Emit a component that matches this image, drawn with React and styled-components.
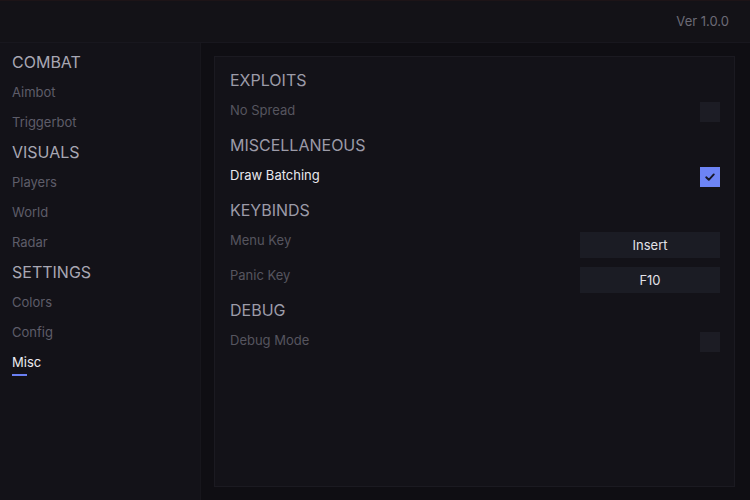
import React from "react";
import styled, { createGlobalStyle } from "styled-components";

const Global = createGlobalStyle`
  html, body { margin: 0; padding: 0; background: #121117; }
  body { font-family: Inter, "Noto Sans", sans-serif; -webkit-font-smoothing: antialiased; }
  * { box-sizing: border-box; }
`;

const Window = styled.div`
  width: 750px;
  height: 500px;
  display: grid;
  grid-template-rows: 43px 1fr;
  grid-template-columns: 200px 1fr;
  background: #131218;
  overflow: hidden;
`;

const Header = styled.header`
  grid-column: 1 / 3;
  display: flex;
  align-items: center;
  justify-content: flex-end;
  padding: 0 21px 2px 0;
  background: #131217;
  border-bottom: 1px solid #18171e;
  border-top: 1px solid #1d1417;
`;

const Version = styled.span`
  font-size: 13px;
  color: #6c6b76;
`;

const Sidebar = styled.nav`
  display: flex;
  flex-direction: column;
  padding: 4px 0 0 12px;
  background: #131218;
`;

const NavHeading = styled.div`
  height: 30px;
  display: flex;
  align-items: center;
  font-size: 16px;
  color: #a8a7b3;
`;

const NavItem = styled.div`
  position: relative;
  height: 30px;
  display: flex;
  align-items: center;
  font-size: 13px;
  color: ${(p) => (p.$active ? "#ececf2" : "#5e5d69")};
  &::after {
    content: "";
    display: ${(p) => (p.$active ? "block" : "none")};
    position: absolute;
    left: 0;
    bottom: 1px;
    width: 15px;
    height: 2px;
    background: #6a7ff2;
  }
`;

const Content = styled.main`
  display: flex;
  padding: 13px 15px 13px 13px;
  background: #0f0e13;
  border-left: 1px solid #17161c;
`;

const Panel = styled.section`
  flex: 1;
  display: flex;
  flex-direction: column;
  padding: 10px 14px 10px 15px;
  background: #131218;
  border: 1px solid #1b1a21;
`;

const Section = styled.div`
  display: flex;
  flex-direction: column;
  & + & { margin-top: 5px; }
`;

const SectionTitle = styled.div`
  height: 25px;
  display: flex;
  align-items: center;
  font-size: 16px;
  color: #9c9ba8;
`;

const Row = styled.div`
  height: 35px;
  display: flex;
  align-items: center;
  justify-content: space-between;
`;

const Label = styled.span`
  font-size: 13px;
  color: ${(p) => (p.$bright ? "#e8e8ee" : "#56555f")};
`;

const Box = styled.div`
  width: 20px;
  height: 20px;
  margin-top: 5px;
  display: flex;
  align-items: center;
  justify-content: center;
  background: ${(p) => (p.$checked ? "#6d84f5" : "#1c1c24")};
`;

const KeyButton = styled.div`
  width: 140px;
  height: 26px;
  margin-top: 10px;
  display: flex;
  align-items: center;
  justify-content: center;
  font-size: 13px;
  color: #e2e2e8;
  background: #1b1c24;
`;

const Check = ({ checked }) => (
  <Box $checked={checked}>
    {checked && (
      <svg width="12" height="12" viewBox="0 0 12 12">
        <path d="M2.2 6.3 L4.8 8.8 L9.8 3.4" fill="none" stroke="#171827" strokeWidth="1.9" strokeLinecap="round" strokeLinejoin="round" />
      </svg>
    )}
  </Box>
);

const nav = [
  { title: "COMBAT", items: ["Aimbot", "Triggerbot"] },
  { title: "VISUALS", items: ["Players", "World", "Radar"] },
  { title: "SETTINGS", items: ["Colors", "Config", "Misc"] },
];

export default function App() {
  return (
    <>
      <Global />
      <Window>
        <Header>
          <Version>Ver 1.0.0</Version>
        </Header>
        <Sidebar>
          {nav.map((g) => (
            <React.Fragment key={g.title}>
              <NavHeading>{g.title}</NavHeading>
              {g.items.map((i) => (
                <NavItem key={i} $active={i === "Misc"}>{i}</NavItem>
              ))}
            </React.Fragment>
          ))}
        </Sidebar>
        <Content>
          <Panel>
            <Section>
              <SectionTitle>EXPLOITS</SectionTitle>
              <Row>
                <Label>No Spread</Label>
                <Check />
              </Row>
            </Section>
            <Section>
              <SectionTitle>MISCELLANEOUS</SectionTitle>
              <Row>
                <Label $bright>Draw Batching</Label>
                <Check checked />
              </Row>
            </Section>
            <Section>
              <SectionTitle>KEYBINDS</SectionTitle>
              <Row>
                <Label>Menu Key</Label>
                <KeyButton>Insert</KeyButton>
              </Row>
              <Row>
                <Label>Panic Key</Label>
                <KeyButton>F10</KeyButton>
              </Row>
            </Section>
            <Section>
              <SectionTitle>DEBUG</SectionTitle>
              <Row>
                <Label>Debug Mode</Label>
                <Check />
              </Row>
            </Section>
          </Panel>
        </Content>
      </Window>
    </>
  );
}
